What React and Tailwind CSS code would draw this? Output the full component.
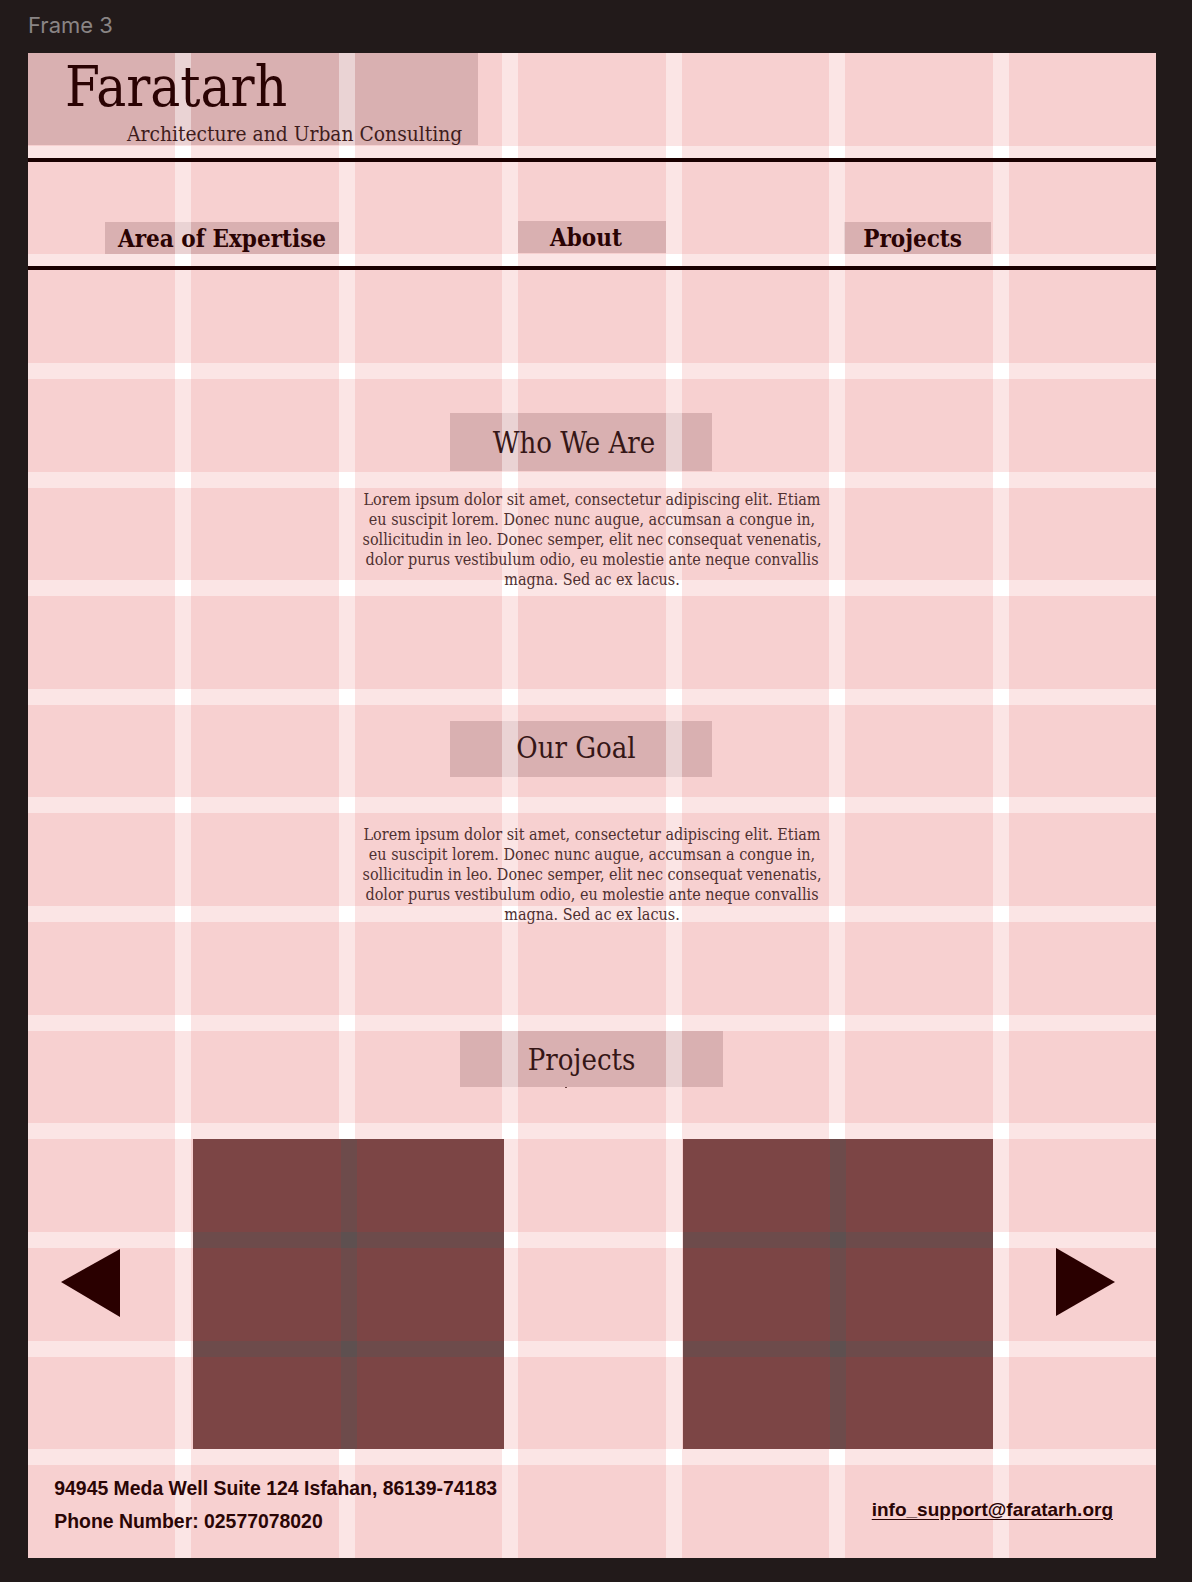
import React, { Fragment } from "react";

const serif = "font-['DejaVu_Serif',serif] [font-stretch:condensed]";

const boxCells = [];
for (let r = 0; r < 5; r++) {
  for (let c = 0; c < 3; c++) {
    boxCells.push((r % 2) + (c % 2));
  }
}

const cellTone = ["bg-[#7c4545]", "bg-[#6d4b4b]", "bg-[#5e5050]"];

const ProjectBox = ({ className }) => (
  <div
    className={`relative z-20 grid h-[309.9px] w-[310.9px] grid-cols-[1fr_16px_1fr] grid-rows-[1fr_16px_1fr_16px_1fr] ${className}`}
  >
    {boxCells.map((t, i) => (
      <div key={i} className={cellTone[t]} />
    ))}
  </div>
);

const GridOverlay = () => (
  <div className="pointer-events-none absolute inset-0 z-10">
    <div className="absolute inset-0 flex">
      {Array.from({ length: 7 }).map((_, i) => (
        <Fragment key={i}>
          {i > 0 && <div className="w-4 bg-white/45" />}
          <div className="flex-1" />
        </Fragment>
      ))}
    </div>
    <div className="absolute inset-0 flex flex-col">
      {Array.from({ length: 14 }).map((_, j) => (
        <Fragment key={j}>
          {j > 0 && (
            <div className="flex h-4">
              {Array.from({ length: 7 }).map((_, i) => (
                <Fragment key={i}>
                  {i > 0 && <div className="w-4 bg-white" />}
                  <div className="flex-1 bg-white/45" />
                </Fragment>
              ))}
            </div>
          )}
          <div className="flex-1" />
        </Fragment>
      ))}
    </div>
  </div>
);

const Lorem = () => (
  <p className={`${serif} relative z-20 w-full text-center text-[16px] leading-[20.2px] text-[#4f3030]`}>
    Lorem ipsum dolor sit amet, consectetur adipiscing elit. Etiam
    <br />
    eu suscipit lorem. Donec nunc augue, accumsan a congue in,
    <br />
    sollicitudin in leo. Donec semper, elit nec consequat venenatis,
    <br />
    dolor purus vestibulum odio, eu molestie ante neque convallis
    <br />
    magna. Sed ac ex lacus.
  </p>
);

const SectionTitle = ({ children, className }) => (
  <div className={`flex items-start justify-center bg-[#d9b0b1] ${className}`}>
    <span className={`${serif} relative z-20 text-[29px] leading-none text-[#351616]`}>{children}</span>
  </div>
);

const App = () => {
  return (
    <div className="min-h-[1582px] bg-[#221a1a] pl-[28px] pt-[14px]">
      <div className="h-[22px] font-['Inter',sans-serif] text-[22px] leading-[22px] text-[#8a8585]">
        Frame 3
      </div>

      <div className="relative mt-[17px] flex h-[1505px] w-[1128px] flex-col bg-[#f7d0d0]">
        <GridOverlay />

        {/* logo */}
        <div className="h-[92px] w-[450px] bg-[#d9b0b1] pt-[6px]">
          <div className={`${serif} relative z-20 pl-[37px] text-[56px] leading-[56px] text-[#2a0303]`}>
            Faratarh
          </div>
          <div className={`${serif} relative z-20 mt-[7px] pl-[99px] text-[20.8px] leading-[24px] text-[#3e1c1c]`}>
            Architecture and Urban Consulting
          </div>
        </div>

        <div className="relative z-20 mt-[12.6px] h-[4px] bg-[#1a0000]" />

        {/* nav */}
        <div className="flex h-[104.7px] items-start pl-[77px] pt-[60.4px]">
          {[
            { label: "Area of Expertise", w: "w-[234px]", ml: "" },
            { label: "About", w: "w-[147.4px] pr-[12px]", ml: "ml-[179.3px] -mt-[1px]" },
            { label: "Projects", w: "w-[147.4px] pr-[10px]", ml: "ml-[178.2px]" },
          ].map((item) => (
            <div
              key={item.label}
              className={`flex h-[32px] items-start justify-center bg-[#d9b0b1] pt-[5px] ${item.w} ${item.ml}`}
            >
              <span className={`${serif} relative z-20 text-[24px] font-bold leading-[24px] text-[#2a0303]`}>
                {item.label}
              </span>
            </div>
          ))}
        </div>

        <div className="relative z-20 h-[4px] bg-[#1a0000]" />

        {/* who we are */}
        <SectionTitle className="ml-[422px] mt-[143px] h-[57.4px] w-[262px] pr-[14px] pt-[16px]">
          Who We Are
        </SectionTitle>
        <div className="mt-[19px]">
          <Lorem />
        </div>

        {/* our goal */}
        <SectionTitle className="ml-[422px] mt-[130px] h-[56.6px] w-[262px] pr-[10px] pt-[13px]">
          Our Goal
        </SectionTitle>
        <div className="mt-[47.4px]">
          <Lorem />
        </div>

        {/* projects */}
        <SectionTitle className="ml-[432px] mt-[105.4px] h-[56px] w-[263px] pr-[20px] pt-[15px]">
          Projects
        </SectionTitle>
        <div className="ml-[537px] h-[1px] w-[2px] bg-[#6a4040]" />

        <div className="mt-[51.4px] flex h-[309.9px] items-start pl-[32.5px]">
          <svg className="mt-[110px] shrink-0" width="59" height="68" viewBox="0 0 59 68">
            <polygon points="0,33 59,0 59,68" fill="#2a0000" />
          </svg>
          <ProjectBox className="ml-[73.9px] shrink-0" />
          <ProjectBox className="ml-[178.3px] shrink-0" />
          <svg className="ml-[62.3px] mt-[109px] shrink-0" width="59" height="68" viewBox="0 0 59 68">
            <polygon points="0,0 59,34 0,68" fill="#2a0000" />
          </svg>
        </div>

        {/* footer */}
        <div className="relative z-20 mt-[22.8px] flex items-start justify-between pl-[26.3px] pr-[43px] font-['Liberation_Sans',Arial,sans-serif] font-bold leading-[32.7px] text-[#2a0505]">
          <div className="text-[19.4px]">
            <div>94945 Meda Well Suite 124 Isfahan, 86139-74183</div>
            <div>Phone Number: 02577078020</div>
          </div>
          <div className="mt-[22px] text-[19px] underline underline-offset-[3px]">info_support@faratarh.org</div>
        </div>
      </div>
    </div>
  );
};

export default App;
